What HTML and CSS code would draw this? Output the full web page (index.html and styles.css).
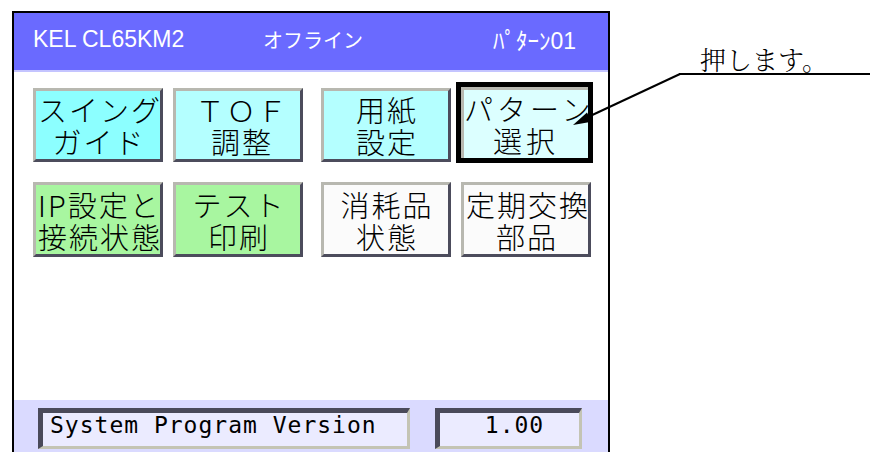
FILE: index.html
```html
<!DOCTYPE html>
<html lang="ja">
<head>
<meta charset="utf-8">
<title>KEL CL65KM2</title>
<link rel="stylesheet" href="styles.css">
</head>
<body>
<div class="panel">
  <div class="header">
    <span class="model">KEL CL65KM2</span>
    <span class="status">オフライン</span>
    <span class="pattern">ﾊﾟﾀｰﾝ01</span>
  </div>
  <div class="menu">
    <div class="row">
      <div class="pair">
        <div class="btn cyan">スイング<br>ガイド</div>
        <div class="btn aqua tof">ＴＯＦ<br>調整</div>
      </div>
      <div class="pair">
        <div class="btn aqua">用紙<br>設定</div>
        <div class="btn selected">パターン<br>選択</div>
      </div>
    </div>
    <div class="row row2">
      <div class="pair">
        <div class="btn green">IP設定と<br>接続状態</div>
        <div class="btn green">テスト<br>印刷</div>
      </div>
      <div class="pair">
        <div class="btn plain">消耗品<br>状態</div>
        <div class="btn plain">定期交換<br>部品</div>
      </div>
    </div>
  </div>
  <div class="footer">
    <div class="field label">System Program Version</div>
    <div class="field value">1.00</div>
  </div>
</div>
<div class="callout">押します。</div>
<svg class="leader" width="870" height="452" viewBox="0 0 870 452">
  <line x1="680" y1="74" x2="588" y2="117" stroke="#000" stroke-width="2"/>
  <polygon points="573,125 591.5,121.8 587,112.6" fill="#000"/>
</svg>
</body>
</html>
```
FILE: styles.css
```css
html, body {
  margin: 0;
  padding: 0;
  width: 870px;
  height: 452px;
  overflow: hidden;
  background: #fff;
}

body {
  position: relative;
  font-family: "Noto Sans CJK JP", sans-serif;
}

.panel {
  box-sizing: border-box;
  margin: 11px 0 0 12px;
  width: 598px;
  height: 470px;
  border: 2px solid #000;
  display: flex;
  flex-direction: column;
  background: #fff;
}

.header {
  flex: none;
  box-sizing: border-box;
  height: 59px;
  background: #6a6aff;
  border-bottom: 2px solid #c4c4ff;
  display: flex;
  align-items: center;
  padding: 0 32px 5px 19px;
  color: #fff;
}

.model {
  font-family: "Liberation Sans", Arial, sans-serif;
  font-size: 23px;
  width: 230px;
  white-space: nowrap;
}

.status {
  font-family: "Noto Sans CJK JP", sans-serif;
  font-size: 20px;
}

.pattern {
  margin-left: auto;
  font-family: "Liberation Sans", "Noto Sans CJK JP", sans-serif;
  font-size: 23px;
}

.menu {
  height: 328px;
  flex: none;
  padding: 16px 0 0 19px;
  box-sizing: border-box;
  display: flex;
  flex-direction: column;
  gap: 20px;
}

.row {
  display: flex;
  gap: 18px;
  height: 74px;
}

.row2 {
  height: 75px;
}

.pair {
  display: flex;
  gap: 10px;
}

.btn {
  box-sizing: border-box;
  width: 130px;
  height: 100%;
  border: 3px solid;
  border-color: #b8b8b0 #4c4c5c #4c4c5c #b8b8b0;
  padding-left: 2px;
  display: flex;
  flex-direction: column;
  justify-content: center;
  text-align: center;
  white-space: nowrap;
  overflow: hidden;
  font-family: "Noto Sans CJK JP", sans-serif;
  font-weight: 300;
  font-size: 29px;
  letter-spacing: 2px;
  line-height: 32px;
  color: #000;
}

.tof {
  padding-left: 8px;
}

.cyan { background: #8cffff; }
.aqua { background: #b4ffff; }
.green { background: #a8f6a0; }
.plain { background: #fbfbfb; }

.selected {
  background: #dcffff;
  border: 5px solid #000;
  width: 137px;
  height: 81px;
  margin: -6px -2px -1px -5px;
  padding: 3px 0 0 3px;
  letter-spacing: 4px;
  box-shadow: inset 3px 3px 0 #b8b8b0;
}

.footer {
  flex: none;
  height: 70px;
  background: #dadaff;
  display: flex;
  align-items: flex-start;
  gap: 25px;
  padding: 8px 0 0 24px;
  box-sizing: border-box;
}

.field {
  box-sizing: border-box;
  height: 41px;
  border-style: solid;
  border-width: 5px 3px 3px 5px;
  border-color: #4a4a5a #c4c4b4 #c4c4b4 #4a4a5a;
  background: #ebebff;
  font-family: "DejaVu Sans Mono", "Liberation Mono", monospace;
  font-size: 23px;
  letter-spacing: 1px;
  line-height: 25px;
  color: #000;
  white-space: nowrap;
}

.label {
  width: 372px;
  padding-left: 7px;
}

.value {
  width: 147px;
  text-align: center;
  padding-left: 10px;
}

.callout {
  position: absolute;
  left: 679px;
  top: 45px;
  width: 191px;
  box-sizing: border-box;
  padding-left: 21px;
  border-bottom: 2px solid #000;
  font-family: "Noto Serif CJK JP", "Noto Sans CJK JP", serif;
  font-weight: 300;
  font-size: 26px;
  line-height: 28px;
  color: #000;
}

.leader {
  position: absolute;
  left: 0;
  top: 0;
  pointer-events: none;
}
```
